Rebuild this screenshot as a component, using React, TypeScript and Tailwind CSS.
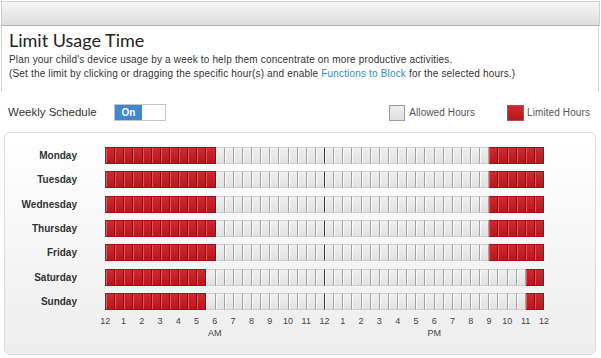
import React from "react";

type Day = { name: string; red: (i: number) => boolean };

const weekday = (i: number) => i < 12 || i >= 42;
const weekend = (i: number) => i < 11 || i >= 46;

const days: Day[] = [
  { name: "Monday", red: weekday },
  { name: "Tuesday", red: weekday },
  { name: "Wednesday", red: weekday },
  { name: "Thursday", red: weekday },
  { name: "Friday", red: weekday },
  { name: "Saturday", red: weekend },
  { name: "Sunday", red: weekend },
];

const hours = ["12", "1", "2", "3", "4", "5", "6", "7", "8", "9", "10", "11", "12", "1", "2", "3", "4", "5", "6", "7", "8", "9", "10", "11", "12"];

function Cell({ red, idx }: { red: boolean; idx: number }) {
  const dark = idx === 23 || idx === 47;
  const base = red
    ? "bg-[linear-gradient(#d02a31,#b8151c)] border-y border-y-[#a50f15] shadow-[inset_1px_0_0_#dd5559]"
    : "bg-[linear-gradient(#f0f0f0,#e0e0e0)] border-y border-y-[#d0d0d0] shadow-[inset_1px_0_0_#fafafa]";
  const right = dark ? "border-r border-r-[#3a3a3a]" : red ? "border-r border-r-[#8e0c12]" : "border-r border-r-[#a3a3a3]";
  return <div className={`flex-1 h-full ${base} ${right}`} />;
}

export default function App() {
  return (
    <div className="w-[601px] h-[358px] bg-white overflow-hidden font-['Liberation_Sans',Arial,sans-serif] text-[#333]">
      <div className="ml-[1px] mt-[1px] w-[599px] h-[25px] border border-[#cfcfcf] border-b-[#b5b5b5] bg-[linear-gradient(#f6f6f6,#dcdcdc)]" />
      <div className="ml-[1px] w-[598px] h-[66px] border-x border-[#d4d4d4] px-[7px] pt-[2px]">
        <h1 className="font-['Lato',sans-serif] text-[18px] leading-[24px] text-[#222]">Limit Usage Time</h1>
        <p className="mt-[1px] text-[10px] leading-[14px] tracking-[0.17px] text-[#333]">
          Plan your child's device usage by a week to help them concentrate on more productive activities.
          <br />
          (Set the limit by clicking or dragging the specific hour(s) and enable{" "}
          <span className="text-[#2b8cbf]">Functions to Block</span> for the selected hours.)
        </p>
      </div>
      <div className="flex items-center h-[40px] pl-[8px] pr-[11px] pt-[1px]">
        <div className="w-[106px] text-[11.5px] text-[#333]">Weekly Schedule</div>
        <div className="flex w-[52px] h-[17px] border border-[#c4c4c4] bg-white">
          <div className="w-[27px] h-full bg-[#3d88cf] flex items-center justify-center text-white text-[10px] font-bold">On</div>
        </div>
        <div className="ml-auto flex items-center">
          <div className="w-[16px] h-[16px] border border-[#9c9c9c] bg-[linear-gradient(#eeeeee,#dedede)]" />
          <span className="ml-[4px] text-[10px] tracking-[0.1px] text-[#555]">Allowed Hours</span>
          <div className="ml-[32px] w-[17px] h-[16px] border border-[#b05055] bg-[linear-gradient(#d02a31,#b8151c)]" />
          <span className="ml-[3px] text-[10px] tracking-[0.1px] text-[#555]">Limited Hours</span>
        </div>
      </div>
      <div className="ml-[4px] w-[592px] h-[223px] rounded-[6px] border border-[#dcdcdc] bg-[linear-gradient(#ffffff,#ededed)] pt-[14px]">
        <div className="flex flex-col gap-[7.33px]">
          {days.map((d) => (
            <div key={d.name} className="flex items-center h-[17px]">
              <div className="w-[72px] text-right text-[10px] font-bold text-[#333]">{d.name}</div>
              <div className="ml-[28px] w-[439px] h-full flex border-l border-l-[#444]">
                {Array.from({ length: 48 }, (_, i) => (
                  <Cell key={i} idx={i} red={d.red(i)} />
                ))}
              </div>
            </div>
          ))}
        </div>
        <div className="mt-[5px] ml-[91px] flex">
          {hours.map((h, i) => (
            <div key={i} className="w-[18.29px] flex flex-col items-center text-[9px] leading-[12px] text-[#444]">
              <span>{h}</span>
              {i === 6 && <span>AM</span>}
              {i === 18 && <span>PM</span>}
            </div>
          ))}
        </div>
      </div>
    </div>
  );
}
